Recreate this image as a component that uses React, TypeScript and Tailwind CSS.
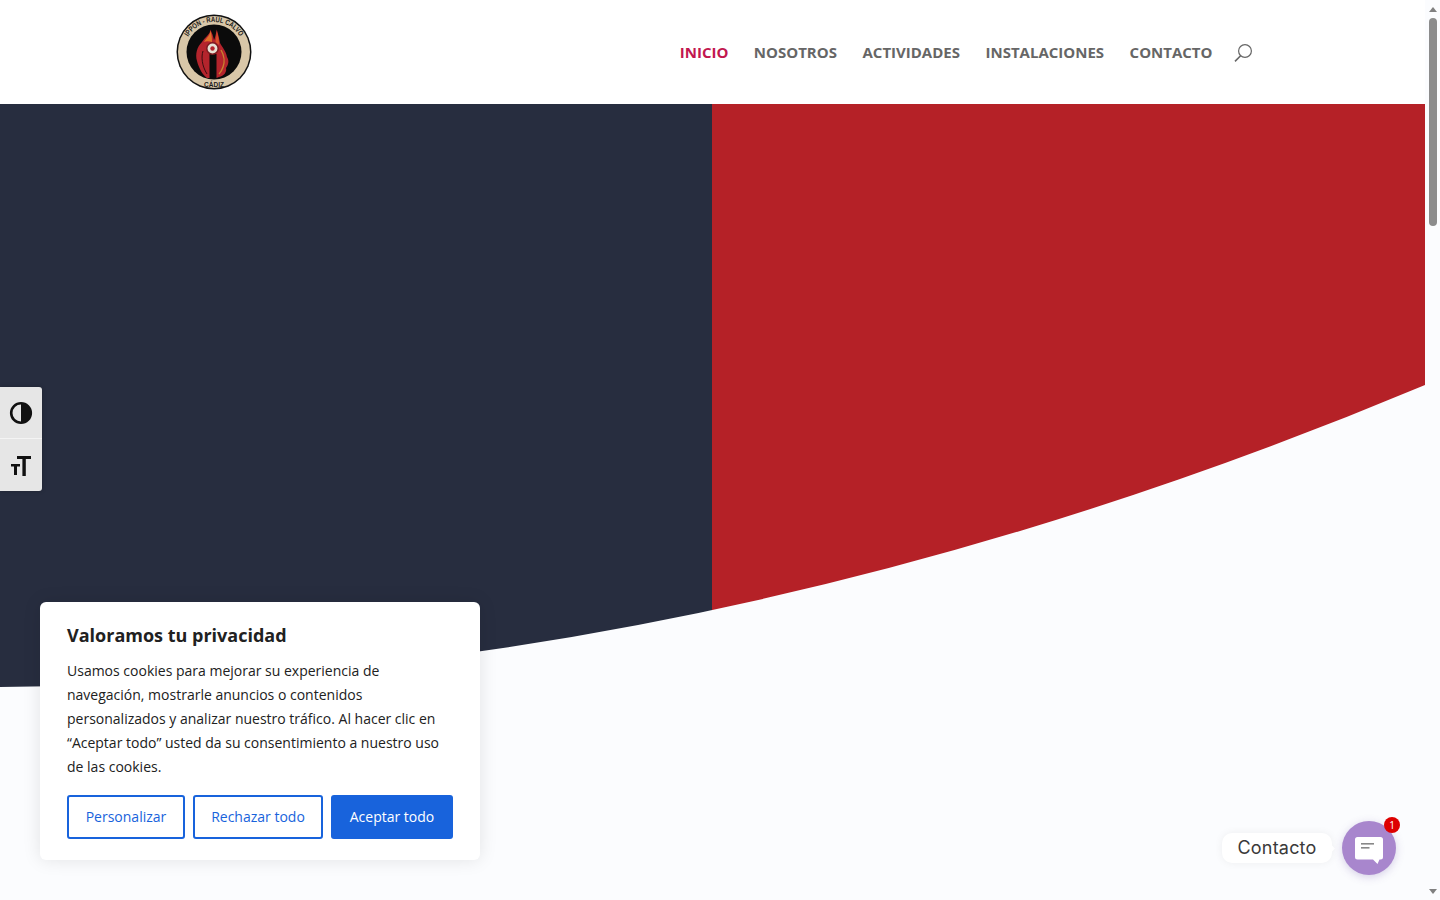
const navItems = ['NOSOTROS', 'ACTIVIDADES', 'INSTALACIONES', 'CONTACTO'];

function Logo() {
  return (
    <svg width="76" height="76" viewBox="0 0 76 76" className="block">
      <circle cx="38" cy="38" r="37.5" fill="#111" />
      <circle cx="38" cy="38" r="36" fill="#d9c7a8" />
      <circle cx="38" cy="38" r="27.5" fill="#0b0b0b" />
      <defs>
        <path id="logo-arc" d="M8 38 A29.8 29.8 0 0 1 68 38" />
      </defs>
      <text fontFamily="'Liberation Sans', sans-serif" fontSize="7.5" fontWeight="700" fill="#1a1a1a">
        <textPath href="#logo-arc" startOffset="50%" textAnchor="middle" textLength="62" lengthAdjust="spacingAndGlyphs">IPPON - RAUL CALVO</textPath>
      </text>
      <text x="38" y="73" textAnchor="middle" fontFamily="'Liberation Sans', sans-serif" fontSize="6.5" fontWeight="700" fill="#1a1a1a">CÁDIZ</text>
      {/* llama */}
      <path d="M34 15.5 C35 20 29 23 26 28 C21 33 19 40 21 47 C23 55 27 61 31 64 L33.5 64 L33.5 40 L40.5 40 L40.5 64 L43 63 C48 62 51 58 50 54 C53 50 53 46 51 43 C50 37 46 33 44 29 C43 24 42 19 40.7 15.5 C40 20 39 24 38 26 C37 22 36 18 34 15.5 Z" fill="#b4242c" />
      <path d="M34 16.5 C35 21 30 24 28 28 C30 27 33 27 36 28 C36 23 35.5 19 34 16.5 Z" fill="#e0702a" />
      <path d="M40.7 17 C40.5 21 40 25 39.5 28 L43 31 C43.2 26 42 21 40.7 17 Z" fill="#d8502a" />
      <path d="M27 37 C25 43 26 52 31 60" fill="none" stroke="#3a0d10" strokeWidth="1" />
      <path d="M45 36 C48 41 49 48 47 53 C46 56 45 58 43 60" fill="none" stroke="#c9842f" strokeWidth="1.4" />
      <circle cx="36.5" cy="34.5" r="5.7" fill="#e8e2d6" stroke="#7b1a1f" strokeWidth="1.5" />
      <circle cx="36.5" cy="34.5" r="2.2" fill="#b4242c" />
    </svg>
  );
}

function SearchGlyph() {
  return (
    <svg width="18" height="18" viewBox="0 0 18 18" fill="none" stroke="#666" strokeWidth="1.2" className="ml-[-4px] mt-[2px]">
      <circle cx="11" cy="7" r="6.4" />
      <path d="M6.6 11.8 L1 17.4" strokeWidth="1.6" />
    </svg>
  );
}

function Scrollbar() {
  return (
    <div className="w-[15px] shrink-0 h-full flex flex-col items-center">
      <div className="h-[18px] w-full flex items-center justify-center">
        <div className="w-0 h-0 border-x-[4px] border-x-transparent border-b-[5px] border-b-[#808080]" />
      </div>
      <div className="w-2 h-[208px] rounded-full bg-[#8c8c8c]" />
      <div className="flex-1" />
      <div className="h-[18px] w-full flex items-center justify-center">
        <div className="w-0 h-0 border-x-[4px] border-x-transparent border-t-[5px] border-t-[#808080]" />
      </div>
    </div>
  );
}

function AccessibilityBar() {
  return (
    <div className="absolute left-0 top-[387px] w-[42px] flex flex-col rounded-r-[3px] bg-[#e6e6e6] shadow-[0_0_4px_rgba(0,0,0,0.25)]">
      <div className="h-[52px] flex items-center justify-center border-b border-[#f4f4f4]">
        <svg width="24" height="24" viewBox="0 0 24 24">
          <circle cx="12" cy="12" r="9.8" fill="none" stroke="#111" strokeWidth="2.6" />
          <path d="M12 2 A10 10 0 0 1 12 22 Z" fill="#111" />
        </svg>
      </div>
      <div className="h-[52px] flex items-center justify-center">
        <svg width="24" height="24" viewBox="0 0 24 24" fill="#111">
          <path d="M8 3 H22 V6 H16.8 V23 H13.4 V6 H8 Z" />
          <path d="M2 11 H11 V13.6 H8 V22 H5 V13.6 H2 Z" />
        </svg>
      </div>
    </div>
  );
}

function CookieCard() {
  return (
    <div className="absolute left-10 top-[602px] w-[440px] h-[258px] bg-white rounded-md shadow-[0_0_18px_rgba(0,0,0,0.1)] px-[27px] pt-5 font-['Open_Sans',sans-serif]">
      <p className="text-[18px] leading-[26px] font-bold text-[#212121]">Valoramos tu privacidad</p>
      <p className="mt-[11px] text-[14px] leading-6 text-[#212121]">
        Usamos cookies para mejorar su experiencia de navegación, mostrarle anuncios o contenidos personalizados y analizar nuestro tráfico. Al hacer clic en “Aceptar todo” usted da su consentimiento a nuestro uso de las cookies.
      </p>
      <div className="mt-4 flex gap-2">
        <button className="w-[118px] h-11 pb-px border-2 border-[#1863dc] rounded-[3px] text-[14px] text-[#1863dc]">Personalizar</button>
        <button className="w-[130px] h-11 pb-px border-2 border-[#1863dc] rounded-[3px] text-[14px] text-[#1863dc]">Rechazar todo</button>
        <button className="w-[122px] h-11 pb-px bg-[#1863dc] rounded-[3px] text-[14px] text-white">Aceptar todo</button>
      </div>
    </div>
  );
}

function ChatWidget() {
  return (
    <div className="absolute left-[1222px] top-[821px] flex items-center gap-[10px]">
      <div className="relative w-[110px] h-[30px] pb-px bg-white rounded-[10px] shadow-[0_0_8px_rgba(0,0,0,0.06)] flex items-center justify-center text-[18px] tracking-[0.2px] text-[#3a3a3a] font-['Inter',sans-serif]">
        Contacto
        <span className="absolute -right-[2px] top-[13px] w-[5px] h-[5px] rotate-45 bg-white" />
      </div>
      <div className="relative w-[54px] h-[54px] rounded-full bg-[#a886cd] shadow-[0_2px_8px_rgba(100,70,160,0.25)] flex items-center justify-center">
        <svg width="28" height="28" viewBox="0 0 28 28" className="mt-[3px]">
          <path d="M2.5 1 H25.5 Q28 1 28 3.5 V21 Q28 23.5 25.5 23.5 L24.5 23.5 L22.5 28 L18 23.5 H2.5 Q0 23.5 0 21 V3.5 Q0 1 2.5 1 Z" fill="#fff" />
          <rect x="6" y="7" width="13" height="1.6" fill="#888" />
          <rect x="6" y="11" width="8.5" height="1.6" fill="#888" />
        </svg>
        <span className="absolute -top-1 -right-1 w-4 h-4 rounded-full bg-[#dd0000] text-white text-[10px] leading-4 text-center">1</span>
      </div>
    </div>
  );
}

export default function App() {
  return (
    <div className="relative w-[1440px] h-[900px] overflow-hidden flex bg-[#fbfcfe] font-['Open_Sans',sans-serif]">
      <div className="w-[1425px] shrink-0 flex flex-col">
        <header className="h-[104px] bg-white flex items-center justify-between pl-[176px] pr-[173px]">
          <Logo />
          <nav className="flex items-center gap-[25.5px] text-[15px] font-bold text-[#666]">
            <span className="text-[#c2174f]">INICIO</span>
            {navItems.map((item) => (
              <span key={item}>{item}</span>
            ))}
            <SearchGlyph />
          </nav>
        </header>

        {/* Hero con curva */}
        <section className="relative h-[583px] flex">
          <div className="w-[712px] bg-[#272d3f]" />
          <div className="flex-1 bg-[#b52127]" />
          <svg className="absolute inset-0" width="1425" height="583" viewBox="0 0 1425 583" preserveAspectRatio="none">
            <path d="M0 583 Q712 580 1425 281 V583 Z" fill="#fbfcfe" />
          </svg>
        </section>
      </div>
      <Scrollbar />

      <AccessibilityBar />
      <CookieCard />
      <ChatWidget />
    </div>
  );
}
